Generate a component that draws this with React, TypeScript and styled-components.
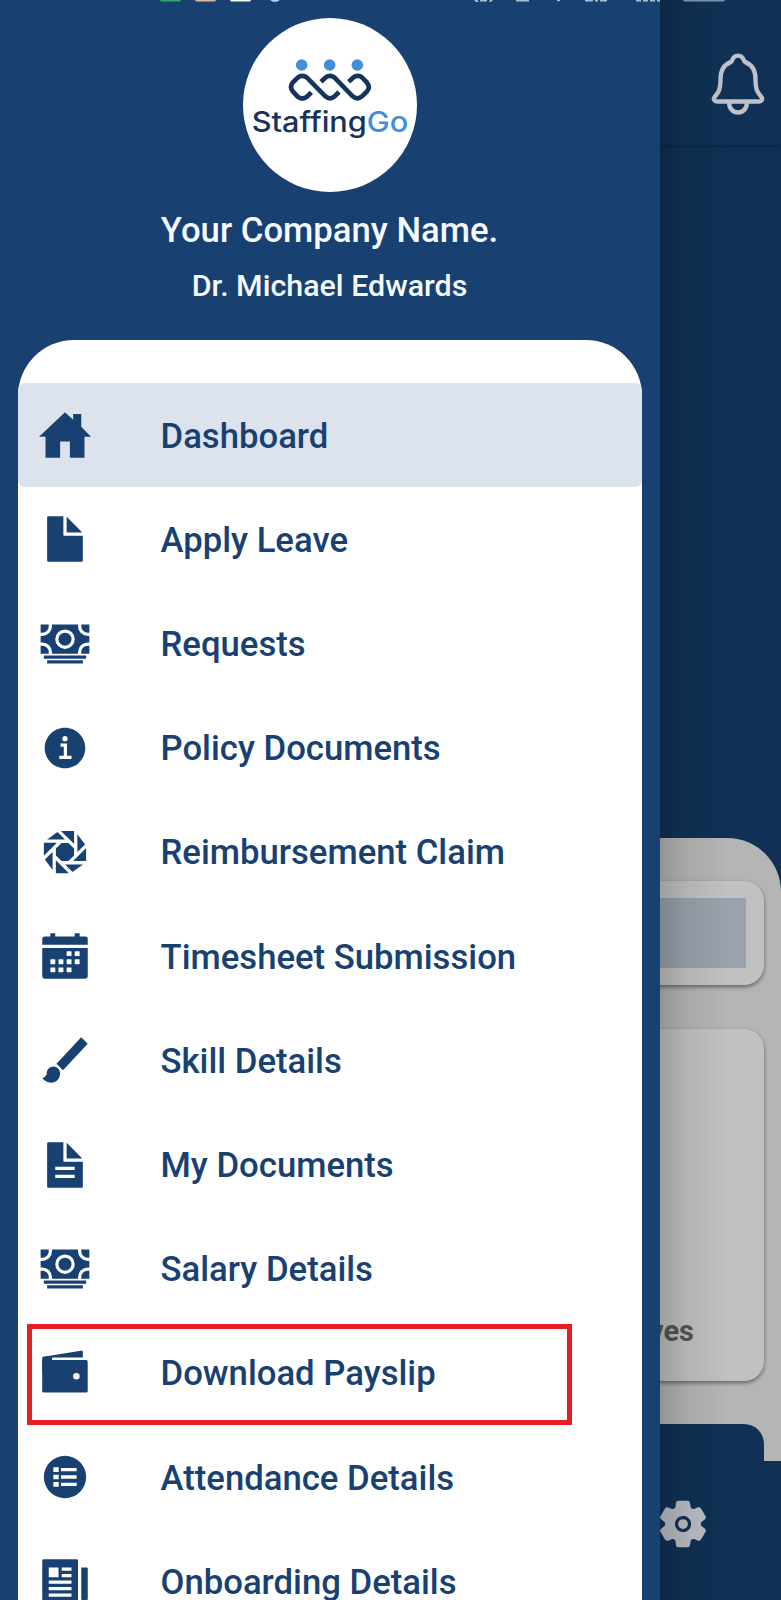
import React from 'react';
import styled, { createGlobalStyle } from 'styled-components';
import {
  IoHomeSharp, IoDocumentSharp, IoCashSharp, IoInformationCircleSharp, IoApertureSharp,
  IoCalendarSharp, IoBrushSharp, IoDocumentTextSharp, IoWalletSharp,
  IoNewspaperSharp, IoNotificationsOutline, IoSettings,
} from 'react-icons/io5';

const navy = '#184172';
const dimNavy = '#103155';

const GlobalStyle = createGlobalStyle`
  * { box-sizing: border-box; }
  body { margin: 0; font-family: Roboto, sans-serif; }
`;

const Screen = styled.div`
  position: relative;
  width: 781px;
  height: 1600px;
  overflow: hidden;
  background: ${dimNavy};
`;

/* Page behind the drawer */
const Page = styled.div`
  display: flex;
  flex-direction: column;
  height: 100%;
`;
const TopBar = styled.header`
  display: flex;
  align-items: center;
  justify-content: flex-end;
  height: 145px;
  padding: 22px 8.5px 0 0;
  color: #bfc1cb;
  font-size: 70px;
  box-shadow: 0 1px 4px rgba(0, 0, 0, 0.3);
`;
const Hero = styled.div`
  height: 693px;
`;
const Sheet = styled.main`
  display: flex;
  flex-direction: column;
  gap: 44px;
  height: 623px;
  padding: 43px 17px 0;
  background: #b5b5b5;
  border-radius: 54px 54px 0 0;
  overflow: hidden;
`;
const Card = styled.section<{ $height: number }>`
  display: flex;
  flex: none;
  height: ${(p) => p.$height}px;
  padding: 17px 18px;
  background: #c1c1c1;
  border-radius: 20px;
  box-shadow: 0 2px 4px rgba(0, 0, 0, 0.45);
`;
const Swatch = styled.div`
  flex: 1;
  background: #9aa2ad;
`;
const CardLabel = styled.span`
  align-self: flex-end;
  margin: 0 0 15px auto;
  padding-right: 52px;
  color: #555;
  font-size: 29px;
  line-height: 36px;
  font-weight: 700;
`;
const DarkCard = styled.section`
  flex: none;
  height: 60px;
  margin-top: -1px;
  background: ${dimNavy};
  border-radius: 20px 20px 0 0;
`;
const BottomNav = styled.nav`
  display: flex;
  flex: 1;
  align-items: center;
  justify-content: flex-end;
  padding: 0 72px 13px 0;
  color: #bcbec6;
  font-size: 52px;
  background: ${dimNavy};
`;

const DrawerShade = styled.div`
  position: absolute;
  top: 0;
  bottom: 0;
  left: 659.5px;
  width: 70px;
  background: linear-gradient(90deg, rgba(0, 0, 0, 0.18), rgba(0, 0, 0, 0.07) 40%, transparent);
`;

/* Drawer */
const Drawer = styled.aside`
  position: absolute;
  top: 0;
  left: 0;
  display: flex;
  flex-direction: column;
  align-items: center;
  width: 659.5px;
  height: 1600px;
  padding: 18px 18px 0 17.5px;
  background: ${navy};
`;
const Avatar = styled.svg`
  flex: none;
  width: 174px;
  height: 174px;
`;
const Company = styled.h1`
  margin: 18px 0 0;
  color: #f4faff;
  font-size: 34.7px;
  line-height: 40px;
  font-weight: 500;
`;
const Person = styled.h2`
  margin: 18px 0 0;
  color: #f4faff;
  font-size: 30.4px;
  line-height: 36px;
  font-weight: 500;
`;
const MenuPanel = styled.nav`
  flex: none;
  width: 624px;
  height: 1300px;
  margin-top: 36px;
  padding-top: 43px;
  background: #fff;
  border-radius: 56px 56px 0 0;
`;
const MenuItem = styled.div<{ $active?: boolean }>`
  position: relative;
  display: flex;
  align-items: center;
  height: 104.22px;
  padding-left: 21.5px;
  gap: 69.5px;
  color: ${navy};
  background: ${(p) => (p.$active ? '#dde3ec' : 'transparent')};
  border-radius: 7px;
  font-size: 52px;
`;
const MenuLabel = styled.span`
  padding-top: 0.8px;
  font-size: 34.7px;
  line-height: 40px;
  font-weight: 500;
  white-space: nowrap;
`;
const Highlight = styled.div`
  position: absolute;
  top: 3px;
  left: 9.5px;
  width: 545px;
  height: 101px;
  border: 5px solid #e71d25;
`;

const StatusIcons = styled.svg`
  position: absolute;
  top: 0;
  left: 0;
`;

const StatusStrip = () => (
  <StatusIcons width="781" height="3" viewBox="0 0 781 3">
    <rect x="160" y="-6" width="21" height="7.5" rx="2" fill="#36a56a" />
    <rect x="195" y="-6" width="21" height="7.5" rx="2" fill="#d9b99a" />
    <rect x="230" y="-6" width="21" height="7.5" rx="2" fill="#f3fbf5" />
    <circle cx="275" cy="-5" r="7" fill="#a9d5f5" />
    <g fill="#a9bdd3">
      <path d="M474 0h3l2 2h-3zM480 0h7v1.4h-7zM490 0h3l-2 2h-2z" />
      <rect x="516" width="13" height="1.5" />
      <rect x="557" width="3" height="1.2" />
      <path d="M585 0h8v1.5h-8zM595 0h3v1.5h-3zM600 0h7v1.5h-7zM636 0h5v1.5h-5zM643 0h5v1.5h-5zM650 0h5v1.5h-5zM657 0h3v1.5h-3z" />
    </g>
    <rect x="683" y="-6" width="42" height="7.5" rx="2" fill="#7b8fa8" />
  </StatusIcons>
);

const Logo = () => (
  <Avatar viewBox="39 24 522 522">
    <circle cx="300" cy="285" r="261" fill="#fff" />
    <g fill="#438ddb">
      <circle cx="215" cy="165" r="17.5" />
      <circle cx="299" cy="165" r="17.5" />
      <circle cx="382" cy="165" r="17.5" />
    </g>
    <g fill="none" stroke="#17335c" strokeWidth="14">
      <path d="M244 247L231 260Q217 271 203 260L188 244Q178 231 188 218L203 203Q217 192 231 203L286 259Q300 271 314 259L327 246" />
      <path d="M273 215L286 203Q300 192 314 203L368 259Q382 271 396 259L411 244Q422 231 411 218L397 203Q383 192 369 203L356 215" />
    </g>
    <text x="65" y="366" textLength="470" lengthAdjust="spacingAndGlyphs" fontFamily="Inter, sans-serif" fontSize="84" fontWeight="500" fill="#17335c">
      Staffing<tspan fill="#438ddb">Go</tspan>
    </text>
  </Avatar>
);

const ListCircle = () => (
  <svg width="1em" height="1em" viewBox="0 0 156 156">
    <circle cx="78" cy="78" r="63.5" fill="currentColor" />
    <path
      fill="#fff"
      d="M43 49h16v14H43zM43 71h16v14H43zM43 93h16v14H43zM66 51h47v10H66zM66 73h47v10H66zM66 95h47v10H66z"
    />
  </svg>
);

const items: { label: string; icon: React.ComponentType; active?: boolean; marked?: boolean }[] = [
  { label: 'Dashboard', icon: IoHomeSharp, active: true },
  { label: 'Apply Leave', icon: IoDocumentSharp },
  { label: 'Requests', icon: IoCashSharp },
  { label: 'Policy Documents', icon: IoInformationCircleSharp },
  { label: 'Reimbursement Claim', icon: IoApertureSharp },
  { label: 'Timesheet Submission', icon: IoCalendarSharp },
  { label: 'Skill Details', icon: IoBrushSharp },
  { label: 'My Documents', icon: IoDocumentTextSharp },
  { label: 'Salary Details', icon: IoCashSharp },
  { label: 'Download Payslip', icon: IoWalletSharp, marked: true },
  { label: 'Attendance Details', icon: ListCircle },
  { label: 'Onboarding Details', icon: IoNewspaperSharp },
];

export default function App() {
  return (
    <Screen>
      <GlobalStyle />
      <Page>
        <TopBar><IoNotificationsOutline /></TopBar>
        <Hero />
        <Sheet>
          <Card $height={104}><Swatch /></Card>
          <Card $height={352}><CardLabel>Leaves</CardLabel></Card>
          <DarkCard />
        </Sheet>
        <BottomNav><IoSettings /></BottomNav>
      </Page>
      <DrawerShade />
      <Drawer>
        <Logo />
        <Company>Your Company Name.</Company>
        <Person>Dr. Michael Edwards</Person>
        <MenuPanel>
          {items.map(({ label, icon: Icon, active, marked }) => (
            <MenuItem key={label} $active={active}>
              <Icon />
              <MenuLabel>{label}</MenuLabel>
              {marked && <Highlight />}
            </MenuItem>
          ))}
        </MenuPanel>
      </Drawer>
      <StatusStrip />
    </Screen>
  );
}
